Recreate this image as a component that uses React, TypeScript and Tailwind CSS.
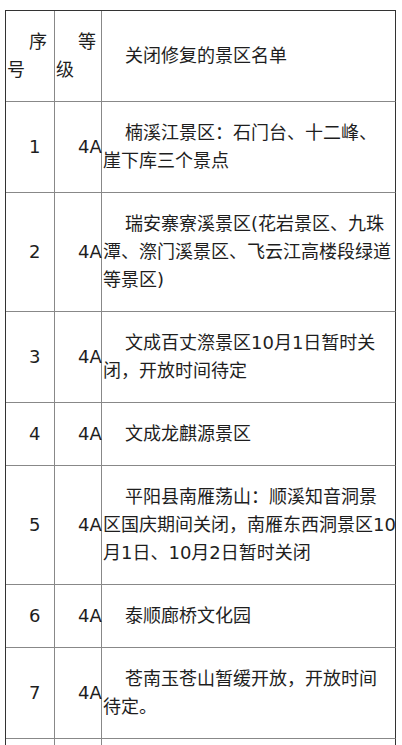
import React from "react";

type Row = {
  no: string[];
  level: string[];
  name: string[];
};

// line breaks follow the reference table exactly
const rows: Row[] = [
  { no: ["序", "号"], level: ["等", "级"], name: ["关闭修复的景区名单"] },
  { no: ["1"], level: ["4A"], name: ["楠溪江景区：石门台、十二峰、", "崖下库三个景点"] },
  {
    no: ["2"],
    level: ["4A"],
    name: ["瑞安寨寮溪景区(花岩景区、九珠", "潭、漈门溪景区、飞云江高楼段绿道", "等景区)"],
  },
  { no: ["3"], level: ["4A"], name: ["文成百丈漈景区10月1日暂时关", "闭，开放时间待定"] },
  { no: ["4"], level: ["4A"], name: ["文成龙麒源景区"] },
  {
    no: ["5"],
    level: ["4A"],
    name: ["平阳县南雁荡山：顺溪知音洞景", "区国庆期间关闭，南雁东西洞景区10", "月1日、10月2日暂时关闭"],
  },
  { no: ["6"], level: ["4A"], name: ["泰顺廊桥文化园"] },
  { no: ["7"], level: ["4A"], name: ["苍南玉苍山暂缓开放，开放时间", "待定。"] },
  // next row is only cut in at the bottom edge, its text is out of view
  { no: ["\u00a0"], level: ["\u00a0"], name: ["\u00a0"] },
];

function Lines({ lines }: { lines: string[] }) {
  return (
    <p className="indent-[22px] whitespace-nowrap">
      {lines.map((line, i) => (
        <React.Fragment key={i}>
          {i > 0 && <br />}
          {line}
        </React.Fragment>
      ))}
    </p>
  );
}

function Cell({ lines, last }: { lines: string[]; last?: boolean }) {
  return (
    <div
      className={`flex items-center border-b border-r border-b-[#888] px-px py-[17px] ${
        last ? "border-r-[#333]" : "border-r-[#888]"
      }`}
    >
      <Lines lines={lines} />
    </div>
  );
}

export default function App() {
  return (
    <div
      className="min-h-screen bg-white pl-[5px] pt-[10px] text-[18px] leading-[28px] text-[#1e1e1e]"
      style={{ fontFamily: '"DejaVu Sans", "Noto Sans CJK SC", sans-serif' }}
    >
      <div className="grid w-[391px] grid-cols-[49px_47px_294px] border-l border-t border-[#333]">
        {rows.map((row, i) => (
          <React.Fragment key={i}>
            <Cell lines={row.no} />
            <Cell lines={row.level} />
            <Cell lines={row.name} last />
          </React.Fragment>
        ))}
      </div>
    </div>
  );
}
